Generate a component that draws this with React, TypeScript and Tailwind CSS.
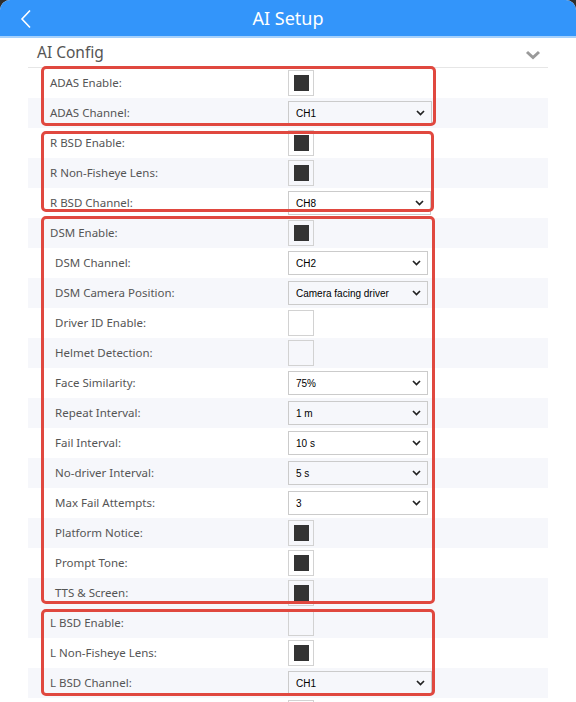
import React from "react";

type Row =
  | { label: string; kind: "check"; checked: boolean; sub?: boolean; shade: boolean }
  | { label: string; kind: "select"; value: string; sub?: boolean; shade: boolean; width: number };

const rows: Row[] = [
  { label: "ADAS Enable:", kind: "check", checked: true, shade: false },
  { label: "ADAS Channel:", kind: "select", value: "CH1", shade: true, width: 144 },
  { label: "R BSD Enable:", kind: "check", checked: true, shade: false },
  { label: "R Non-Fisheye Lens:", kind: "check", checked: true, shade: true },
  { label: "R BSD Channel:", kind: "select", value: "CH8", shade: false, width: 143 },
  { label: "DSM Enable:", kind: "check", checked: true, shade: true },
  { label: "DSM Channel:", kind: "select", value: "CH2", sub: true, shade: false, width: 140 },
  { label: "DSM Camera Position:", kind: "select", value: "Camera facing driver", sub: true, shade: true, width: 140 },
  { label: "Driver ID Enable:", kind: "check", checked: false, sub: true, shade: false },
  { label: "Helmet Detection:", kind: "check", checked: false, sub: true, shade: true },
  { label: "Face Similarity:", kind: "select", value: "75%", sub: true, shade: false, width: 140 },
  { label: "Repeat Interval:", kind: "select", value: "1 m", sub: true, shade: true, width: 140 },
  { label: "Fail Interval:", kind: "select", value: "10 s", sub: true, shade: false, width: 140 },
  { label: "No-driver Interval:", kind: "select", value: "5 s", sub: true, shade: true, width: 140 },
  { label: "Max Fail Attempts:", kind: "select", value: "3", sub: true, shade: false, width: 140 },
  { label: "Platform Notice:", kind: "check", checked: true, sub: true, shade: true },
  { label: "Prompt Tone:", kind: "check", checked: true, sub: true, shade: false },
  { label: "TTS & Screen:", kind: "check", checked: true, sub: true, shade: true },
  { label: "L BSD Enable:", kind: "check", checked: false, shade: true },
  { label: "L Non-Fisheye Lens:", kind: "check", checked: true, shade: false },
  { label: "L BSD Channel:", kind: "select", value: "CH1", shade: true, width: 144 },
  { label: "", kind: "check", checked: false, shade: false },
];

function CheckBox({ checked }: { checked: boolean }) {
  return (
    <div className="flex h-[26px] w-[26px] items-center justify-center border border-[#d2d2d2]">
      {checked && <div className="h-[16px] w-[15px] bg-[#333333]" />}
    </div>
  );
}

function SelectBox({ value, width }: { value: string; width: number }) {
  return (
    <div
      className="flex h-[24px] items-center justify-between border border-[#cbcbcb] pl-[7px] pr-[6px] text-[10px] text-black [font-family:'Liberation_Sans',Arial,sans-serif]"
      style={{ width }}
    >
      <span>{value}</span>
      <svg width="9" height="6" viewBox="0 0 9 6" fill="none">
        <path d="M1 1 L4.5 4.5 L8 1" stroke="#222" strokeWidth="1.7" />
      </svg>
    </div>
  );
}

function FrameBox({ top, height, width }: { top: number; height: number; width: number }) {
  return (
    <div
      className="pointer-events-none absolute left-[13px] rounded-[5px] border-[3px] border-[#e0483f]"
      style={{ top, height, width }}
    />
  );
}

export default function App() {
  return (
    <div className="min-h-[702px] bg-[#2e2e2e] [font-family:'Noto_Sans',sans-serif]">
      <div className="h-[702px] overflow-hidden rounded-t-[10px] bg-white">
        {/* title bar */}
        <div className="relative flex h-[38px] items-center justify-center border-b-2 border-[#a6d1fc] bg-[#3395fa]">
          <svg className="absolute left-[20px] top-[9px]" width="12" height="20" viewBox="0 0 12 20" fill="none">
            <path d="M10 1.5 L2 10 L10 18.5" stroke="white" strokeWidth="1.6" />
          </svg>
          <span className="text-[18px] text-white">AI Setup</span>
        </div>

        <div className="relative mx-[28px]">
          {/* section header */}
          <div className="flex h-[30px] items-center justify-between border-b border-[#e6e6e6] pl-[9px] pr-[7px]">
            <span className="text-[15.5px] text-[#555555]">AI Config</span>
            <svg className="mt-[5px]" width="16" height="10" viewBox="0 0 16 10" fill="none">
              <path d="M2 2 L8 7.5 L14 2" stroke="#9a9a9a" strokeWidth="3" />
            </svg>
          </div>

          <div className="relative">
            {rows.map((r, i) => (
              <div
                key={i}
                className={`flex h-[30px] items-center ${r.shade ? "bg-[#f6f7fb]" : "bg-white"}`}
              >
                <div
                  className={`text-[11.5px] text-[#555555] ${r.sub ? "w-[260px] pl-[27px]" : "w-[260px] pl-[22px]"}`}
                >
                  {r.label}
                </div>
                {r.kind === "check" ? (
                  <CheckBox checked={r.checked} />
                ) : (
                  <SelectBox value={r.value} width={r.width} />
                )}
              </div>
            ))}

            {/* highlighted groups */}
            <FrameBox top={-2} height={60} width={395} />
            <FrameBox top={63} height={81} width={393} />
            <FrameBox top={148} height={388} width={394} />
            <FrameBox top={541} height={87} width={394} />
          </div>
        </div>
      </div>
    </div>
  );
}
